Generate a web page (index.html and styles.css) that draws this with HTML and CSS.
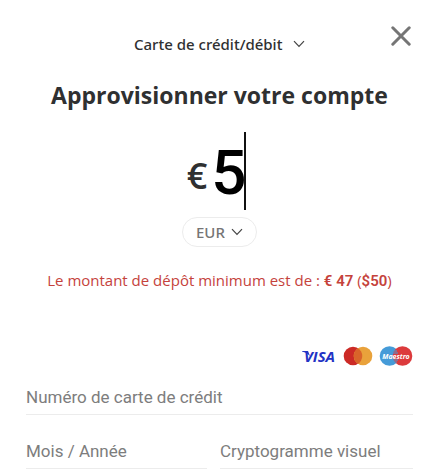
FILE: index.html
```html
<!DOCTYPE html>
<html lang="fr">
<head>
<meta charset="utf-8">
<meta name="viewport" content="width=device-width, initial-scale=1">
<title>Approvisionner votre compte</title>
<link rel="stylesheet" href="styles.css">
</head>
<body>
<form class="deposit">
  <header class="topbar">
    <div class="picker method">
      <select aria-label="Mode de paiement"><option>Carte de crédit/débit</option></select>
      <svg class="chevron" width="12" height="8" viewBox="0 0 12 8" aria-hidden="true"><path d="M1 1.2 6 6.4 11 1.2"/></svg>
    </div>
    <button class="close" type="button" aria-label="Fermer">
      <svg width="20" height="20" viewBox="0 0 20 20" aria-hidden="true"><path d="M1.8 1.8 18.2 18.2M18.2 1.8 1.8 18.2"/></svg>
    </button>
  </header>

  <h1 class="title">Approvisionner votre compte</h1>

  <div class="amount">
    <label class="symbol" for="amount">€</label>
    <input class="value" id="amount" type="text" inputmode="decimal" value="5">
  </div>

  <div class="picker currency">
    <select aria-label="Devise"><option>EUR</option></select>
    <svg class="chevron" width="12" height="8" viewBox="0 0 12 8" aria-hidden="true"><path d="M1 1.2 6 6.4 11 1.2"/></svg>
  </div>

  <p class="error">Le montant de dépôt minimum est de : <b>€ 47</b> (<b>$50</b>)</p>

  <div class="brands">
    <svg width="38" height="20" viewBox="0 0 38 20" role="img" aria-label="Visa">
      <text class="visa" x="5" y="16">VISA</text>
      <path class="visa-wing" d="M3 5H9L11 10Q8 6.5 3 5.6Z"/>
    </svg>
    <svg width="30" height="20" viewBox="0 0 30 20" role="img" aria-label="Mastercard">
      <circle cx="10" cy="10" r="9.3" fill="#cc2a26"/>
      <circle cx="20" cy="10" r="9.3" fill="#e9a23b"/>
      <path d="M15 2.2A9.3 9.3 0 0 1 15 17.8A9.3 9.3 0 0 1 15 2.2Z" fill="#d9642a"/>
    </svg>
    <svg width="34" height="20" viewBox="0 0 34 20" role="img" aria-label="Maestro">
      <circle cx="10.5" cy="10" r="9.8" fill="#459bd8"/>
      <circle cx="23.5" cy="10" r="9.8" fill="#dc3a3c"/>
      <path d="M15 5H18M14 7H19M14 14H19M15 16H18" stroke="#459bd8"/>
      <text class="maestro" x="17" y="13" text-anchor="middle">Maestro</text>
    </svg>
  </div>

  <div class="fields">
    <input class="field wide" type="text" inputmode="numeric" placeholder="Numéro de carte de crédit" aria-label="Numéro de carte de crédit">
    <input class="field" type="text" placeholder="Mois / Année" aria-label="Mois / Année">
    <input class="field" type="text" placeholder="Cryptogramme visuel" aria-label="Cryptogramme visuel">
  </div>
</form>
</body>
</html>
```
FILE: styles.css
```css
* {
  box-sizing: border-box;
}

body {
  margin: 0;
  background: #fff;
  color: #2f3031;
  font-family: "Open Sans", "Noto Sans", sans-serif;
}

.deposit {
  display: flex;
  flex-direction: column;
  align-items: center;
  padding: 24px 26px 0;
}

.topbar {
  display: grid;
  grid-template-columns: 1fr auto 1fr;
  align-self: stretch;
  align-items: start;
}

.picker {
  display: grid;
  align-items: center;
}

.picker select,
.picker .chevron {
  grid-area: 1 / 1;
}

.picker select {
  appearance: none;
  border: 0;
  background: transparent;
  color: inherit;
  font: inherit;
}

.chevron {
  justify-self: end;
  fill: none;
  stroke: #444;
  stroke-width: 1.2;
  pointer-events: none;
}

.method {
  grid-column: 2;
  padding-top: 8px;
  font-family: "Noto Sans", sans-serif;
  font-size: 15px;
  font-weight: 500;
  line-height: 24px;
}

.method select {
  padding: 0 22px 0 0;
}

.close {
  justify-self: end;
  display: flex;
  margin: 0;
  padding: 2px;
  border: 0;
  background: none;
}

.close svg {
  stroke: #757575;
  stroke-width: 3;
  stroke-linecap: round;
}

.title {
  margin: 23px 0 0;
  font-size: 23px;
  font-weight: 700;
  line-height: 32px;
  text-align: center;
}

.amount {
  display: flex;
  align-items: center;
  gap: 4px;
  margin-top: 21px;
  padding-right: 6px;
}

.symbol {
  padding-top: 10px;
  font-size: 36px;
  font-weight: 600;
  line-height: 40px;
}

.value {
  width: 35px;
  height: 78px;
  padding: 2px 0 0;
  border: 0;
  border-right: 2px solid #111;
  outline: 0;
  background: none;
  color: #000;
  font: 500 62px Roboto, sans-serif;
}

.currency {
  margin-top: 7px;
  padding: 0 13px;
  border: 1px solid #ececec;
  border-radius: 16px;
  color: #757575;
  font-family: "Noto Sans", sans-serif;
  font-size: 15px;
  font-weight: 500;
  line-height: 28px;
}

.currency select {
  padding: 0 18px 0 0;
}

.error {
  margin: 21px 0 0;
  color: #c5423c;
  font-size: 15px;
  line-height: 24px;
  text-align: center;
}

.error b {
  font-family: Roboto, sans-serif;
  font-weight: 600;
}

.brands {
  display: flex;
  align-items: center;
  align-self: flex-end;
  gap: 6px;
  margin-top: 53px;
}

.visa {
  fill: #2233c4;
  font: italic 700 15px "Open Sans", sans-serif;
}

.visa-wing {
  fill: #2233c4;
}

.maestro {
  fill: #fff;
  font: italic 700 7px "Open Sans", sans-serif;
}

.fields {
  display: grid;
  grid-template-columns: 15fr 16fr;
  gap: 13px;
  align-self: stretch;
  margin-top: 8px;
}

.field {
  width: 100%;
  height: 41px;
  padding: 5px 0 0;
  border: 0;
  border-bottom: 1px solid #ececec;
  border-radius: 0;
  outline: 0;
  background: none;
  color: #333;
  font: 17px Roboto, sans-serif;
}

.wide {
  grid-column: 1 / -1;
}

.field::placeholder {
  color: #7d7d7d;
  opacity: 1;
}
```
